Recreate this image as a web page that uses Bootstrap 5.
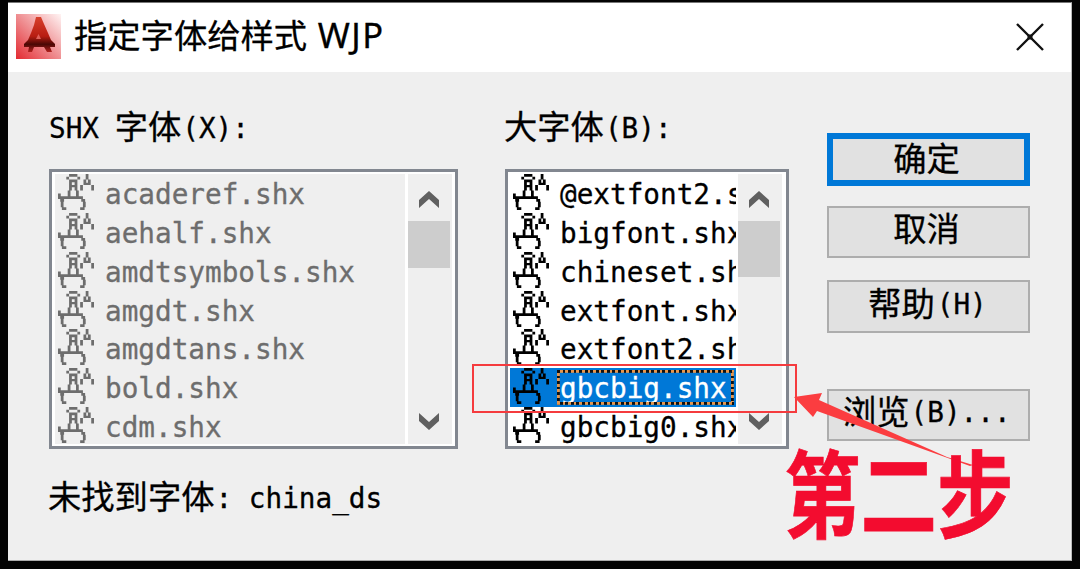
<!DOCTYPE html>
<html lang="zh-CN">
<head>
<meta charset="utf-8">
<title>指定字体给样式 WJP</title>
<link href="https://cdn.jsdelivr.net/npm/bootstrap@5.3.0/dist/css/bootstrap.min.css" rel="stylesheet">
<style>
body{width:1080px;height:569px;overflow:hidden;background:#030303;font-family:"DejaVu Sans Mono","Noto Sans CJK SC",monospace;font-size:27.7px;line-height:38.9px;color:#000;padding:2px 8px 9px;white-space:pre;-webkit-text-stroke:.3px}
.dlg{width:1064px;height:558.5px;background:#efefef;border-top:1px solid #777;border-right:1px solid #bbb;border-bottom:1px solid #aaa}
.zh{font-family:"Noto Sans CJK SC",sans-serif;font-size:33.3px;line-height:1;position:relative;left:-1px;top:1px}
.titlebar{height:69px;background:#fff;padding:0 27px 0 8px}
.titlebar .cap{font-family:"Noto Sans","Noto Sans CJK SC",sans-serif;font-size:34.5px;letter-spacing:1.6px;margin-left:13px;height:44px;line-height:44px;margin-top:-5px}
.titlebar .zh{letter-spacing:0;left:0;top:0}
.main-area{padding:33px 41px 0 41px}
.lbl{height:46px;line-height:46px;margin-bottom:18px;position:relative;top:1px}
.col-shx{width:409px;margin-right:47px}
.col-big{width:284px;margin-right:38px}
.lb{height:280px;border:3px solid #828790;background:#fff;padding:2px 2px 2px 3px}
.lb .items{overflow:hidden;height:270px}
.dis .items{background:#efefef;color:#6d6d6d;width:350px;margin-right:3px}
.big .items{width:226px;margin-left:-1px;margin-right:2px}
.it{height:38.85px;line-height:38.85px;padding-left:3px}
.it svg{width:36px;height:36px;flex:none;margin-right:11px}
.it .tx{height:38.85px;position:relative;top:2px}
.sel{background:#0078d7}
.sel .tx{color:#fff;width:174px;flex:none}
.focusbox{left:-3px;top:0;width:177px;height:35px;
background:repeating-linear-gradient(90deg,#111 0 2.8px,#e8964c 2.8px 5.55px) top/100% 2.8px no-repeat,
repeating-linear-gradient(90deg,#e8964c 0 2.8px,#111 2.8px 5.55px) bottom/100% 2.8px no-repeat,
repeating-linear-gradient(#111 0 2.8px,#e8964c 2.8px 5.55px) left/2.8px 100% no-repeat,
repeating-linear-gradient(#111 0 2.8px,#e8964c 2.8px 5.55px) right/2.8px 100% no-repeat}
.sb{width:44px;height:270px;background:#efefef;color:#606060}
.sb svg{width:20px;height:17px;margin-left:11px}
.thumb{width:42px;background:#cdcdcd}
.btns{width:203px;padding-top:28px}
.btns .btn{width:203px;height:52.5px;padding:0 0 3px;border:2.6px solid #adadad;border-radius:0;background:#e1e1e1;color:#000;font-size:27.7px;line-height:44px;white-space:pre}
.btns .btn .zh{left:-2px;top:2px}
.btns .btn.browse{text-align:left;padding-left:15px}
.btns .btn.browse .zh{left:-1px}
.btns .btn.ok{border:6px solid #0078d7;line-height:40px}
.btns .btn.ok .zh{top:1px}
.msg{height:46px;line-height:46px;margin-top:27px}
.frame{left:472px;top:364px;width:325px;height:49px;border:2.5px solid #f53b3e}
.step{left:784px;top:452px;font:700 76.5px/76px "Noto Sans CJK SC",sans-serif;color:#f30c2f;transform:scaleY(1.25);-webkit-text-stroke:.6px}
</style>
<script src="https://cdn.jsdelivr.net/npm/bootstrap@5.3.0/dist/js/bootstrap.bundle.min.js"></script>
</head>
<body class="position-relative"><svg width="0" height="0" class="position-absolute"><defs><symbol id="shx" viewBox="0 0 13 13"><path fill="currentColor" d="M4 0h3v1H4zM3 1h1v1H3zM7 1h1v1H7zM4 2h3v1H4zM4 3h1v3H4zM6 3h1v3H6zM5 4h1v.8H5zM3.5 6h1v2h-1zM6.5 6h1v2h-1zM0 7h1v2H0zM1 8h8v1H1zM.8 9h1.4v1H.8zM8.4 9h1.4v1H8.4zM1 10h1v2H1zM9 10h1v2H9zM1.4 12H3v1H1.4zM8 12h1.6v1H8zM10 0h1v2h-1zM9.2 2h1v2h-1zM10.8 2h1v2h-1zM9.5 3.2h2V4h-2zM8 4h1v2H8zM12 4h1v2h-1z"/></symbol></defs></svg><div class="dlg"><div class="titlebar d-flex align-items-center"><svg style="margin-top:-3px" width="45" height="45" viewBox="0 0 45 45"><defs><linearGradient id="bg" x1="0" y1="1" x2="1" y2="0"><stop offset="0" stop-color="#e32a31"/><stop offset=".5" stop-color="#ef8f92"/><stop offset="1" stop-color="#fff4f4"/></linearGradient><linearGradient id="fa" x1="0" y1="0" x2="0" y2="1"><stop offset="0" stop-color="#d8402c"/><stop offset=".55" stop-color="#b81d12"/><stop offset=".78" stop-color="#4a0805"/><stop offset="1" stop-color="#b3201d"/></linearGradient></defs><path fill="url(#bg)" d="M0 0h45v45H0z"/><path fill="url(#fa)" d="M20 3h5l3 7 4 9 3 7 4 4v3h-5l2 5h-5l-3-5H18l-2 5h-4l1-5H8v-3l4-4 3-7 3-8z"/><path fill="#e0605a" d="M20 25l2.500-5 2.500 5z"/></svg><span class="cap"><span class="zh">指定字体给样式</span> WJP</span><svg class="ms-auto" width="28" height="28" viewBox="0 0 28 28" style="margin-top:-2px"><path d="M1 1l26 26M27 1L1 27" stroke="#111" stroke-width="2.4"/><path d="M11.500 11.500h5v5h-5z" fill="#111"/></svg></div><div class="main-area"><div class="d-flex"><div class="col-shx"><div class="lbl">SHX <span class="zh">字体</span>(X):</div><div class="lb dis d-flex"><div class="items"><div class="it d-flex"><svg><use href="#shx"/></svg><span class="tx">acaderef.shx</span></div><div class="it d-flex"><svg><use href="#shx"/></svg><span class="tx">aehalf.shx</span></div><div class="it d-flex"><svg><use href="#shx"/></svg><span class="tx">amdtsymbols.shx</span></div><div class="it d-flex"><svg><use href="#shx"/></svg><span class="tx">amgdt.shx</span></div><div class="it d-flex"><svg><use href="#shx"/></svg><span class="tx">amgdtans.shx</span></div><div class="it d-flex"><svg><use href="#shx"/></svg><span class="tx">bold.shx</span></div><div class="it d-flex"><svg><use href="#shx"/></svg><span class="tx">cdm.shx</span></div></div><div class="sb d-flex flex-column"><svg style="margin-top:17px" viewBox="0 0 20 17"><path fill="currentColor" d="M10 0l10 9v8L10 8 0 17V9z"/></svg><div class="thumb" style="height:47px;margin-top:13px"></div><svg class="mt-auto" style="margin-bottom:14px" viewBox="0 0 20 17"><path fill="currentColor" d="M10 17L0 8V0l10 9L20 0v8z"/></svg></div></div></div><div class="col-big"><div class="lbl"><span class="zh">大字体</span>(B):</div><div class="lb big d-flex"><div class="items"><div class="it d-flex"><svg><use href="#shx"/></svg><span class="tx">@extfont2.shx</span></div><div class="it d-flex"><svg><use href="#shx"/></svg><span class="tx">bigfont.shx</span></div><div class="it d-flex"><svg><use href="#shx"/></svg><span class="tx">chineset.shx</span></div><div class="it d-flex"><svg><use href="#shx"/></svg><span class="tx">extfont.shx</span></div><div class="it d-flex"><svg><use href="#shx"/></svg><span class="tx">extfont2.shx</span></div><div class="it d-flex sel"><svg><use href="#shx"/></svg><span class="tx">gbcbig.shx<i class="focusbox position-absolute"></i></span></div><div class="it d-flex"><svg><use href="#shx"/></svg><span class="tx">gbcbig0.shx</span></div></div><div class="sb d-flex flex-column"><svg style="margin-top:17px" viewBox="0 0 20 17"><path fill="currentColor" d="M10 0l10 9v8L10 8 0 17V9z"/></svg><div class="thumb" style="height:56px;margin-top:13px"></div><svg class="mt-auto" style="margin-bottom:14px" viewBox="0 0 20 17"><path fill="currentColor" d="M10 17L0 8V0l10 9L20 0v8z"/></svg></div></div></div><div class="btns d-flex flex-column"><button class="btn ok"><span class="zh">确定</span></button><button class="btn" style="margin-top:20px"><span class="zh">取消</span></button><button class="btn" style="margin-top:22px"><span class="zh">帮助</span>(H)</button><button class="btn browse" style="margin-top:56px"><span class="zh">浏览</span>(B)...</button></div></div><div class="msg"><span class="zh">未找到字体</span>: china_ds</div></div></div><div class="frame position-absolute"></div><svg class="position-absolute top-0 start-0" width="1080" height="569"><path fill="#fb3d40" d="M794 397l28-4-3 7 128 57 26 8-3 1-153-55-4 6z"/></svg><div class="step position-absolute">第二步</div></body>
</html>
